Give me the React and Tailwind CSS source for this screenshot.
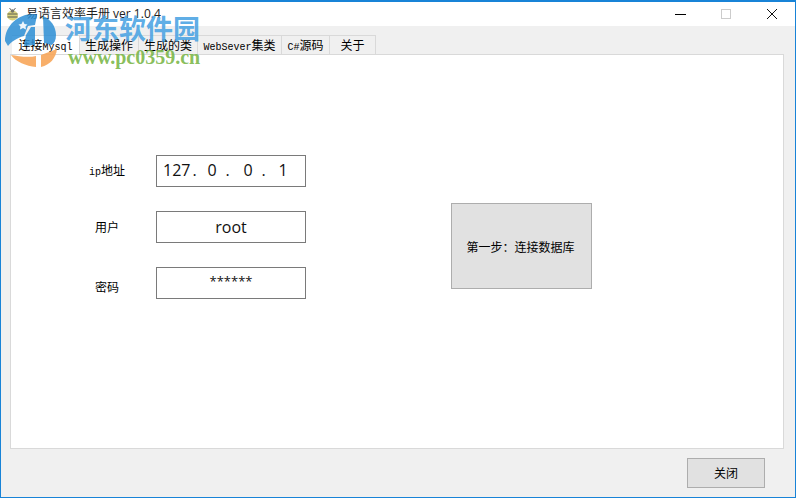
const CJK = 'font-["Liberation_Mono","Noto_Sans_CJK_SC",monospace]';

function Latin({ children }) {
  return <span className="text-[10px]">{children}</span>;
}

const tabs = [
  { label: <>连接<Latin>Mysql</Latin></>, width: 'w-[68px]', active: true },
  { label: '生成操作', width: 'w-[59px]' },
  { label: '生成的类', width: 'w-[59px]' },
  { label: <><Latin>WebSever</Latin>集类</>, width: 'w-[84px]' },
  { label: <><Latin>C#</Latin>源码</>, width: 'w-[48px]' },
  { label: '关于', width: 'w-[46px]' },
];

function Logo() {
  return (
    <svg width="70" height="62" viewBox="0 0 70 62" className="absolute left-[-1px] top-[6px]">
      <g fill="#2d8fd5" opacity="0.85">
        <path d="M5 33 C5 17 19 6 33 6 C35 6 36 6 37 7 L35 17 L28 18 L24 28 C17 30 11 34 8 38 Z" />
        <path d="M43 8 C50 11 56 18 56 27 C56 32 54 35 52 37 L44 35 Z" />
        <path d="M31 19 L35 19 L35 37 L24 38 L26 27 Z" />
      </g>
      <path d="M23 13 l1.5 3 3 .5 -2 2 .5 3 -3-1.5 -3 1.5 .5-3 -2-2 3-.5z" fill="#ffffff" opacity="0.9" />
      <g fill="#f8a75a" opacity="0.9">
        <path d="M11 47 C18 48 28 50 36 48 L36 59 C26 58 16 54 11 47Z" />
        <path d="M41 47 L57 41 C56 50 50 57 41 59Z" />
      </g>
    </svg>
  );
}

function Bee() {
  return (
    <svg width="13" height="14" viewBox="0 0 13 14" className="shrink-0 ml-[1px]">
      <path d="M3.5 1 l2 2.5 M9.5 1 l-2 2.5" stroke="#666" strokeWidth="1" />
      <ellipse cx="6.5" cy="8.5" rx="5.5" ry="5" fill="#d9d27e" />
      <path d="M1.5 7 h10 M1.5 10 h10" stroke="#5a5a4e" strokeWidth="1.2" />
      <circle cx="6.5" cy="4" r="1.8" fill="#77776a" />
    </svg>
  );
}

function Field({ label, labelClass, children }) {
  return (
    <div className="flex items-center h-8">
      <div className={`w-[145px] pl-[47px] text-center text-xs text-black ${labelClass} ${CJK}`}>{label}</div>
      <div className="w-[150px] h-8 border border-[#7a7a7a] bg-white flex items-center justify-center text-[16px] text-[#111] font-['Open_Sans',sans-serif]">
        {children}
      </div>
    </div>
  );
}

export default function App() {
  return (
    <div className="relative w-[796px] h-[498px] overflow-hidden bg-[#f0f0f0] border border-t-2 border-[#1883d7] flex flex-col">
      {/* Title bar */}
      <div className="h-[24px] shrink-0 bg-white flex items-center pl-[4px]">
        <Bee />
        <span className="ml-[7px] text-[12px] text-[#222] font-['Open_Sans','Noto_Sans_CJK_SC',sans-serif]">易语言效率手册 ver 1.0.4</span>
        <div className="ml-auto flex items-center">
          <div className="w-[46px] flex justify-center"><div className="w-[11px] h-px bg-black" /></div>
          <div className="w-[46px] flex justify-center"><div className="w-[10px] h-[10px] border border-[#cccccc]" /></div>
          <div className="w-[46px] flex justify-center">
            <svg width="12" height="12" viewBox="0 0 12 12"><path d="M1 1 L11 11 M11 1 L1 11" stroke="#111" strokeWidth="1" /></svg>
          </div>
        </div>
      </div>

      {/* Tabs */}
      <div className="flex pl-[11px] pt-[9px] h-[28px] shrink-0">
        {tabs.map((tab, i) => (
          <div
            key={i}
            className={`${tab.width} h-[19px] pt-[3px] flex items-center justify-center text-xs text-black border-r border-t border-[#d9d9d9] whitespace-nowrap ${tab.active ? 'bg-white' : 'bg-[#f0f0f0]'} ${CJK}`}
          >
            <span>{tab.label}</span>
          </div>
        ))}
      </div>

      {/* Panel */}
      <div className="ml-[9px] w-[774px] h-[395px] shrink-0 bg-white border border-[#d9d9d9] flex">
        <div className="flex flex-col gap-6 pt-[100px]">
          <Field label={<><Latin>ip</Latin>地址</>} labelClass="pt-[2px]">
            <div className="w-full pl-[6px] -mt-[3px] flex text-[16px]">
              <span>127</span><span className="ml-[2px] w-[15px]">.</span>
              <span className="w-[18px]">0</span><span className="w-[18px]">.</span>
              <span className="w-[18px]">0</span><span className="w-[17px]">.</span>
              <span>1</span>
            </div>
          </Field>
          <Field label="用户" labelClass="pt-[4px]"><span className="-mt-[1px]">root</span></Field>
          <Field label="密码" labelClass="pt-[12px]"><span className="-mt-[3px] text-[13px]">******</span></Field>
        </div>
        <div className="ml-[145px] mt-[148px] w-[141px] h-[86px] bg-[#e1e1e1] border border-[#adadad] flex items-center justify-center pt-[5px] pr-[2px]">
          <span className={`text-xs text-black ${CJK}`}>第一步：连接数据库</span>
        </div>
      </div>

      {/* Footer */}
      <div className="flex justify-end pr-[30px] pt-[9px]">
        <div className={`w-[78px] h-[30px] pt-[3px] bg-[#e1e1e1] border border-[#adadad] flex items-center justify-center text-xs text-black ${CJK}`}>关闭</div>
      </div>

      {/* Watermark */}
      <Logo />
      <div className="absolute left-[64px] top-[9px] text-[27px] leading-[34px] font-bold text-[#4aa3e3]/90 font-['Noto_Sans_CJK_SC',serif] whitespace-nowrap">河东软件园</div>
      <div className="absolute left-[67px] top-[44px] text-[20px] leading-[22px] font-bold text-[#7ab648]/90 font-['Liberation_Serif',serif] whitespace-nowrap">www.pc0359.cn</div>
    </div>
  );
}
